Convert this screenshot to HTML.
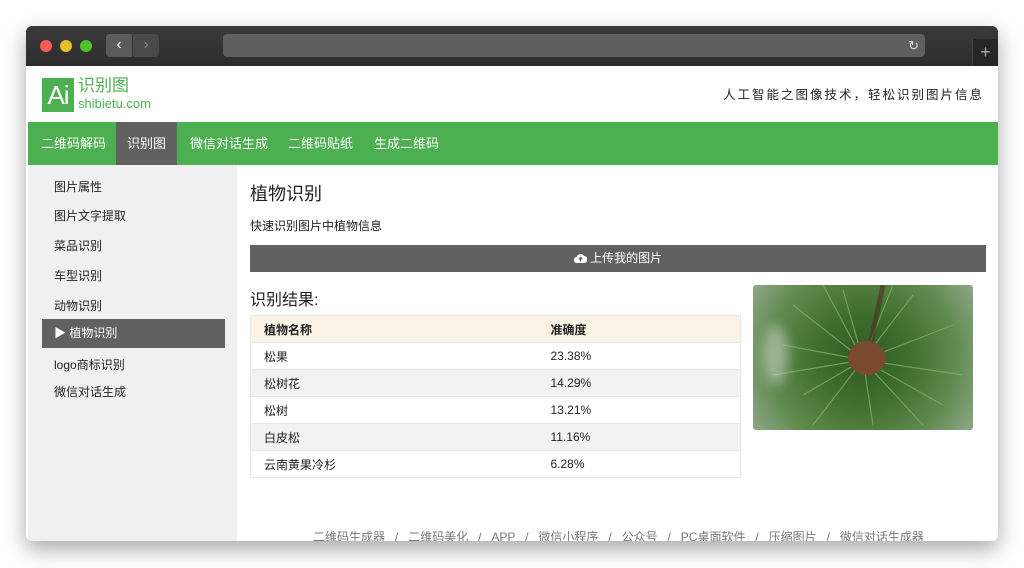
<!DOCTYPE html>
<html><head><meta charset="utf-8"><style>
*{margin:0;padding:0;box-sizing:border-box}
body{width:1024px;height:568px;background:#fff;position:relative;overflow:hidden;font-family:"Liberation Sans","Noto Sans CJK SC",sans-serif;color:#222}
.a{position:absolute}
.win{left:26px;top:26px;width:972px;height:515px;border-radius:6px;box-shadow:0 8px 22px rgba(0,0,0,.35);overflow:hidden;background:#fff}
.tb{left:0;top:0;width:972px;height:40px;background:linear-gradient(#3a3a3a,#2c2c2c)}
.dot{top:14px;width:12px;height:12px;border-radius:50%}
.side div{position:absolute;left:26px;font-size:12px;color:#222}
td{font-size:12px;height:27px;padding-left:13px;border-top:1px solid #e6e6e6}
</style></head><body>
<div class="a win">
 <div class="a tb">
  <div class="a dot" style="left:14px;background:#fc5b57"></div>
  <div class="a dot" style="left:34px;background:#e5bf2a"></div>
  <div class="a dot" style="left:54px;background:#54c22f"></div>
  <div class="a" style="left:80px;top:8px;width:26px;height:23px;background:#5b5b5b;border-radius:4px 0 0 4px;color:#eee;font-size:16px;text-align:center;line-height:22px">&#8249;</div>
  <div class="a" style="left:107px;top:8px;width:26px;height:23px;background:#4a4a4a;border-radius:0 4px 4px 0;color:#888;font-size:16px;text-align:center;line-height:22px">&#8250;</div>
  <div class="a" style="left:197px;top:8px;width:702px;height:23px;background:#5f5f5f;border-radius:4px;color:#ddd;font-size:13px;text-align:right;padding-right:6px;line-height:23px">&#8635;</div>
  <div class="a" style="left:946px;top:13px;width:26px;height:27px;background:#262626;border-left:1px solid #444;color:#aaa;font-size:18px;text-align:center;line-height:26px">+</div>
 </div>
 <div class="a" style="left:0;top:40px;width:972px;height:56px;background:#fff">
  <div class="a" style="left:16px;top:12px;width:32px;height:34px;background:#4caf50;color:#fff;font-size:26px;line-height:34px;text-align:center;letter-spacing:-1px">Ai</div>
  <div class="a" style="left:52px;top:10px;color:#4caf50;font-size:17px;line-height:20px">识别图</div>
  <div class="a" style="left:52px;top:30px;color:#4caf50;font-size:13px;line-height:16px">shibietu.com</div>
  <div class="a" style="right:14px;top:18px;font-size:12.5px;letter-spacing:2px;color:#222">人工智能之图像技术，轻松识别图片信息</div>
 </div>
 <div class="a" style="left:2px;top:96px;width:970px;height:43px;background:#4caf50;color:#fff;font-size:13px;line-height:43px">
  <span class="a" style="left:13px">二维码解码</span>
  <span class="a" style="left:88px;width:61px;height:43px;background:#616161;text-align:center">识别图</span>
  <span class="a" style="left:162px">微信对话生成</span>
  <span class="a" style="left:260px">二维码贴纸</span>
  <span class="a" style="left:346px">生成二维码</span>
 </div>
 <div class="a side" style="left:2px;top:139px;width:209px;height:380px;background:#f0f0f0">
  <div style="top:13px">图片属性</div>
  <div style="top:42px">图片文字提取</div>
  <div style="top:72px">菜品识别</div>
  <div style="top:102px">车型识别</div>
  <div style="top:132px">动物识别</div>
  <div style="left:14px;top:154px;width:183px;height:29px;background:#616161;color:#fff;line-height:29px;padding-left:12px;position:absolute">▶ 植物识别</div>
  <div style="top:191px">logo商标识别</div>
  <div style="top:218px">微信对话生成</div>
 </div>
 <div class="a" style="left:224px;top:154px;font-size:18px">植物识别</div>
 <div class="a" style="left:224px;top:191px;font-size:12px">快速识别图片中植物信息</div>
 <div class="a" style="left:224px;top:219px;width:736px;height:27px;background:#616161;color:#fff;font-size:12px;line-height:27px;text-align:center"><svg width="13" height="10" viewBox="0 0 13 10" style="vertical-align:-1px"><path d="M3 10a3 3 0 0 1-.3-6A4 4 0 0 1 10 3a3.5 3.5 0 0 1 0 7z" fill="#fff"/><path d="M6.5 8.5V4.5M4.8 6.2l1.7-1.8 1.7 1.8" stroke="#616161" stroke-width="1.3" fill="none"/></svg> 上传我的图片</div>
 <div class="a" style="left:224px;top:260px;font-size:16px">识别结果:</div>
 <table class="a" style="left:224px;top:289px;width:491px;border-collapse:collapse;border:1px solid #e6e6e6">
  <tr style="background:#fbf3e5;font-weight:bold"><td style="width:287px">植物名称</td><td>准确度</td></tr>
  <tr><td>松果</td><td>23.38%</td></tr>
  <tr style="background:#f2f2f2"><td>松树花</td><td>14.29%</td></tr>
  <tr><td>松树</td><td>13.21%</td></tr>
  <tr style="background:#f2f2f2"><td>白皮松</td><td>11.16%</td></tr>
  <tr><td>云南黄果冷杉</td><td>6.28%</td></tr>
 </table>
 <div class="a" style="left:727px;top:259px;width:220px;height:145px;border-radius:3px;overflow:hidden;background:radial-gradient(circle at 50% 50%,#2f5a22 0,#3f6e2e 35%,#5f8a4e 70%,#8fa888 100%)">
  <svg class="a" style="left:0;top:0" width="220" height="145"><g stroke="#7fae6a" stroke-width="1.2" opacity=".8">
   <path d="M110 75L40 20M110 75L30 60M110 75L50 110M110 75L90 5M110 75L160 10M110 75L200 40M110 75L210 90M110 75L170 140M110 75L120 140M110 75L60 140M110 75L20 90M110 75L140 0M110 75L190 120M110 75L70 0"/></g>
   <path d="M130 0L115 70" stroke="#4a3020" stroke-width="5" opacity=".6"/></svg>
  <div class="a" style="left:10px;top:40px;width:25px;height:60px;border-radius:50%;background:rgba(220,225,220,.5);filter:blur(6px)"></div>
  <div class="a" style="left:95px;top:56px;width:38px;height:34px;border-radius:50%;background:#7a4a2e"></div>
 </div>
 <div class="a" style="left:287px;top:502px;font-size:12px;color:#777;word-spacing:6.6px">二维码生成器 / 二维码美化 / APP / 微信小程序 / 公众号 / PC桌面软件 / 压缩图片 / 微信对话生成器</div>
</div>
</body></html>
